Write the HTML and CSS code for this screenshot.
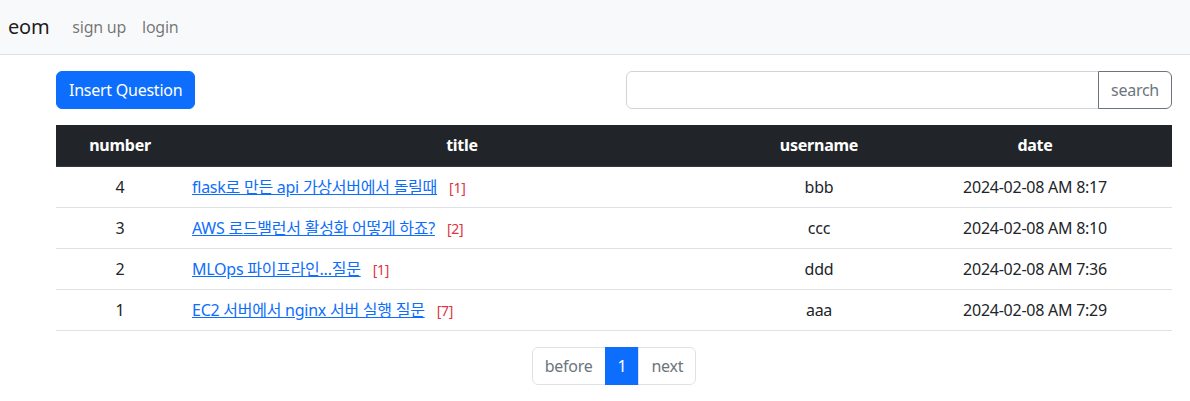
FILE: index.html
```html
<!DOCTYPE html>
<html lang="ko">
<head>
<meta charset="utf-8">
<title>eom</title>
<link rel="stylesheet" href="styles.css">
</head>
<body>
<nav class="navbar">
  <a class="brand" href="#">eom</a>
  <a class="nav-link" href="#">sign up</a>
  <a class="nav-link" href="#">login</a>
</nav>
<main class="container">
  <div class="toolbar">
    <a class="btn btn-primary" href="#">Insert Question</a>
    <div class="input-group">
      <input class="search-input" type="text">
      <button class="btn btn-outline">search</button>
    </div>
  </div>
  <table class="table">
    <colgroup>
      <col class="c-num"><col class="c-title"><col class="c-user"><col class="c-date">
    </colgroup>
    <thead>
      <tr><th>number</th><th>title</th><th>username</th><th>date</th></tr>
    </thead>
    <tbody>
      <tr><td>4</td><td class="t-left"><a href="#">flask로 만든 api 가상서버에서 돌릴때</a><span class="count">[1]</span></td><td>bbb</td><td>2024-02-08 AM 8:17</td></tr>
      <tr><td>3</td><td class="t-left"><a href="#">AWS 로드밸런서 활성화 어떻게 하죠?</a><span class="count">[2]</span></td><td>ccc</td><td>2024-02-08 AM 8:10</td></tr>
      <tr><td>2</td><td class="t-left"><a href="#">MLOps 파이프라인...질문</a><span class="count">[1]</span></td><td>ddd</td><td>2024-02-08 AM 7:36</td></tr>
      <tr><td>1</td><td class="t-left"><a href="#">EC2 서버에서 nginx 서버 실행 질문</a><span class="count">[7]</span></td><td>aaa</td><td>2024-02-08 AM 7:29</td></tr>
    </tbody>
  </table>
  <ul class="pagination">
    <li class="page-item"><a class="page-link" href="#">before</a></li>
    <li class="page-item active"><a class="page-link" href="#">1</a></li>
    <li class="page-item"><a class="page-link" href="#">next</a></li>
  </ul>
</main>
</body>
</html>
```
FILE: styles.css
```css
* { box-sizing: border-box; }
html, body { margin: 0; padding: 0; }
body {
  font-family: "Noto Sans", "Noto Sans CJK KR", sans-serif;
  font-size: 16px;
  line-height: 1.5;
  letter-spacing: -0.25px;
  color: #212529;
  background: #fff;
}
a { color: #0d6efd; }

.navbar {
  display: flex;
  align-items: center;
  height: 55px;
  padding: 0 8px;
  background: #f8f9fa;
  border-bottom: 1px solid #dee2e6;
}
.brand {
  font-size: 20px;
  color: rgba(0,0,0,0.9);
  text-decoration: none;
  margin-right: 15px;
  line-height: 30px;
}
.nav-link {
  color: rgba(0,0,0,0.55);
  text-decoration: none;
  padding: 8px;
  line-height: 24px;
}

.container {
  margin: 16px 18px 0 56px;
}
.toolbar {
  display: flex;
  justify-content: space-between;
  align-items: center;
  margin-bottom: 16px;
}
.btn {
  display: inline-block;
  font-family: inherit;
  font-size: 16px;
  line-height: 24px;
  letter-spacing: inherit;
  padding: 6px 12px;
  border-radius: 6px;
  border: 1px solid transparent;
  text-decoration: none;
  cursor: pointer;
}
.btn-primary {
  background: #0d6efd;
  border-color: #0d6efd;
  color: #fff;
}
.input-group {
  display: flex;
  width: 546px;
}
.search-input {
  flex: 1;
  font-family: inherit;
  font-size: 16px;
  line-height: 24px;
  padding: 6px 12px;
  border: 1px solid #ced4da;
  border-radius: 6px 0 0 6px;
  outline: none;
  min-width: 0;
}
.btn-outline {
  background: #fff;
  color: #6c757d;
  border-color: #6c757d;
  border-radius: 0 6px 6px 0;
  margin-left: -1px;
}

.table {
  width: 100%;
  border-collapse: collapse;
  table-layout: fixed;
  margin-bottom: 16px;
}
.c-num { width: 128px; }
.c-title { width: 556px; }
.c-user { width: 158px; }
.c-date { width: 274px; }
.table th {
  background: #212529;
  color: #fff;
  font-weight: 700;
  padding: 8px 8px 9px;
  text-align: center;
  border-bottom: 1px solid #32383e;
}
.table td {
  padding: 8px;
  text-align: center;
  border-bottom: 1px solid #dee2e6;
}
.table td.t-left { text-align: left; }
.count {
  color: #dc3545;
  font-size: 14px;
  margin-left: 12px;
}

.pagination {
  display: flex;
  justify-content: center;
  list-style: none;
  margin: 0;
  padding: 0;
}
.page-link {
  display: block;
  padding: 6px 12px;
  line-height: 24px;
  color: #6c757d;
  text-decoration: none;
  border: 1px solid #dee2e6;
  margin-left: -1px;
  background: #fff;
}
.page-item:first-child .page-link { border-radius: 6px 0 0 6px; margin-left: 0; }
.page-item:last-child .page-link { border-radius: 0 6px 6px 0; }
.page-item.active .page-link {
  background: #0d6efd;
  border-color: #0d6efd;
  color: #fff;
}
```
